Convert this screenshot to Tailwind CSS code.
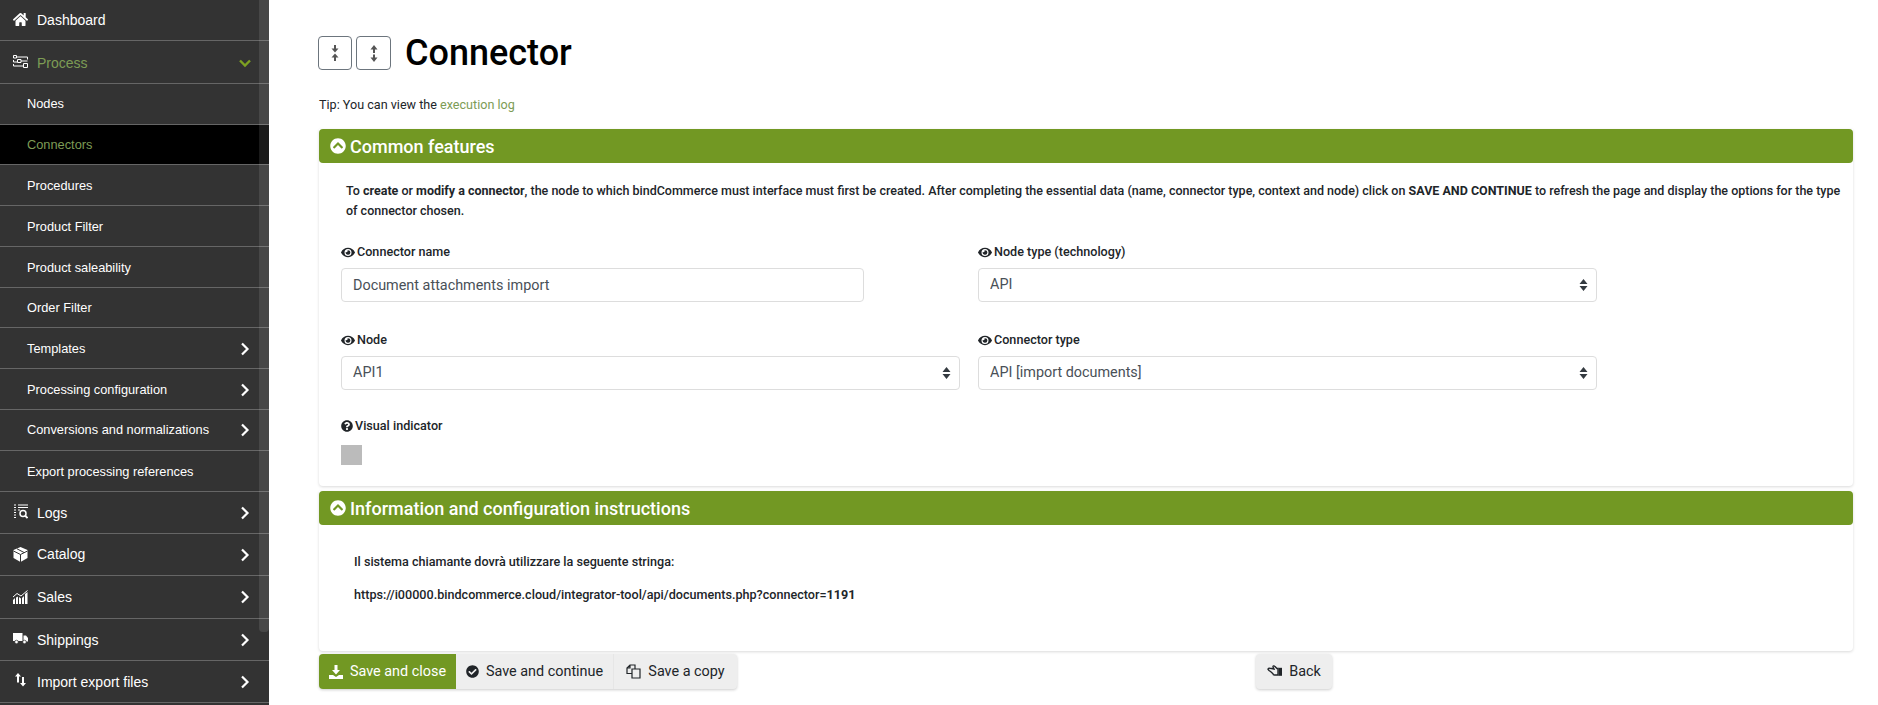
<!doctype html>
<html>

<head>
    <meta charset="UTF-8">
    <meta name="viewport" content="width=device-width, initial-scale=1.0">
    <title>Connector</title>
    <script src="https://cdn.jsdelivr.net/npm/@tailwindcss/browser@4"></script>
</head>

<body class="h-screen w-screen overflow-hidden bg-white flex font-['Roboto',sans-serif] text-[#212529]">
    <svg class="hidden">
        <symbol id="eye" viewBox="0 0 576 512"><path fill="currentColor" d="M572.52 241.4C518.29 135.59 410.93 64 288 64S57.68 135.64 3.48 241.41a32.35 32.35 0 0 0 0 29.19C57.71 376.41 165.07 448 288 448s230.32-71.64 284.52-177.41a32.35 32.35 0 0 0 0-29.19zM288 400a144 144 0 1 1 144-144 143.93 143.93 0 0 1-144 144zm0-240a95.31 95.31 0 0 0-25.31 3.79 47.85 47.85 0 0 1-66.9 66.9A95.78 95.78 0 1 0 288 160z"/></symbol>
        <symbol id="circle-up" viewBox="0 0 512 512"><path fill="currentColor" d="M8 256C8 119 119 8 256 8s248 111 248 248-111 248-248 248S8 393 8 256zm231-113.9L103.5 277.6c-9.4 9.4-9.4 24.6 0 33.9l17 17c9.4 9.4 24.6 9.4 33.9 0L256 226.9l101.6 101.6c9.4 9.4 24.6 9.4 33.9 0l17-17c9.4-9.4 9.4-24.6 0-33.9L273 142.1c-9.4-9.4-24.6-9.4-34 0z"/></symbol>
        <symbol id="chev" viewBox="0 0 10 14"><path fill="none" stroke="currentColor" stroke-width="2.2" d="M2 1.500 7.500 7 2 12.500"/></symbol>
        <symbol id="updown" viewBox="0 0 9 12"><path fill="currentColor" d="M4.500 0 8.500 5H.5ZM4.500 12 .5 7H8.500Z"/></symbol>
    </svg>

    <!-- sidebar -->
    <aside class="w-[269px] h-full shrink-0 bg-[#333] relative overflow-hidden font-['Liberation_Sans',sans-serif] text-white">
        <div class="absolute top-0 right-0 w-[10px] h-[632px] rounded-b bg-white/10"></div>
        <nav class="text-[14px]">
            <a class="flex items-center h-[41px] border-b border-[#666] pl-[13px]">
                <svg class="w-[15px] h-[15px] mr-[9px] -mt-[1px]" viewBox="0 0 576 512" preserveAspectRatio="none"><path fill="currentColor" d="M280.37 148.26L96 300.11V464a16 16 0 0 0 16 16l112.06-.29a16 16 0 0 0 15.92-16V368a16 16 0 0 1 16-16h64a16 16 0 0 1 16 16v95.64a16 16 0 0 0 16 16.05L464 480a16 16 0 0 0 16-16V300L295.67 148.26a12.19 12.19 0 0 0-15.3 0zM571.6 251.47L488 182.56V44.05a12 12 0 0 0-12-12h-56a12 12 0 0 0-12 12v72.61L318.47 43a48 48 0 0 0-61 0L4.34 251.47a12 12 0 0 0-1.6 16.9l25.5 31A12 12 0 0 0 45.15 301l235.22-193.74a12.19 12.19 0 0 1 15.3 0L530.9 301a12 12 0 0 0 16.9-1.6l25.5-31a12 12 0 0 0-1.7-16.93z"/></svg>
                Dashboard
            </a>
            <a class="flex items-center h-[43px] pt-[2px] border-b border-[#666] pl-[13px] pr-[18px] text-[#7d9c55]">
                <svg class="w-[15px] h-[13px] mr-[9px] -mt-[4px] text-white" viewBox="0 0 15 13"><path fill="none" stroke="currentColor" d="M.5.5h3v2.500h-3zM3.500 2H14.500V4.500M.5 5V7H4M4.500 4.500h3.500v3h-3.500zM8 6H14.500M.5 9V11H10.500M10.500 8.500h4v4h-4z"/></svg>
                Process
                <svg class="w-[12px] h-[9px] ml-auto text-[#7da122]" viewBox="0 0 12 9"><path fill="none" stroke="currentColor" stroke-width="2.400" d="M1 1.500 6 6.500 11 1.500"/></svg>
            </a>
        </nav>
        <nav class="text-[12.8px]">
            <a class="flex items-center h-[41px] border-b border-[#666] pl-[27px]">Nodes</a>
            <a class="flex items-center h-[40px] border-b border-[#666] pl-[27px] bg-black text-[#7d9c55]">Connectors</a>
            <a class="flex items-center h-[41px] pt-[1px] border-b border-[#666] pl-[27px]">Procedures</a>
            <a class="flex items-center h-[41px] pt-[1px] border-b border-[#666] pl-[27px]">Product Filter</a>
            <a class="flex items-center h-[41px] pt-[1px] border-b border-[#666] pl-[27px]">Product saleability</a>
            <a class="flex items-center h-[40px] border-b border-[#666] pl-[27px]">Order Filter</a>
            <a class="flex items-center h-[41px] pt-[1px] border-b border-[#666] pl-[27px] pr-[19px]">Templates<svg class="w-[10px] h-[14px] ml-auto"><use href="#chev"/></svg></a>
            <a class="flex items-center h-[41px] pt-[1px] border-b border-[#666] pl-[27px] pr-[19px]">Processing configuration<svg class="w-[10px] h-[14px] ml-auto"><use href="#chev"/></svg></a>
            <a class="flex items-center h-[41px] border-b border-[#666] pl-[27px] pr-[19px]">Conversions and normalizations<svg class="w-[10px] h-[14px] ml-auto"><use href="#chev"/></svg></a>
            <a class="flex items-center h-[41px] pt-[1px] border-b border-[#666] pl-[27px]">Export processing references</a>
        </nav>
        <nav class="text-[14px]">
            <a class="flex items-center h-[42px] pt-[1px] border-b border-[#666] pl-[13px] pr-[19px]">
                <svg class="w-[15px] h-[15px] mr-[9px] -mt-1" viewBox="0 0 15 15"><path fill="none" stroke="currentColor" d="M5 1H15M5 3.500H15M1 1H3M1 3.500H3M1 6H3M1 8.500H3M1 11H3M1 13.500H3M5 6H7"/><circle cx="10" cy="9.500" r="3" fill="none" stroke="currentColor" stroke-width="1.500"/><path stroke="currentColor" stroke-width="1.800" d="M12 11.500 14.500 14"/></svg>
                Logs<svg class="w-[10px] h-[14px] ml-auto"><use href="#chev"/></svg>
            </a>
            <a class="flex items-center h-[42px] border-b border-[#666] pl-[13px] pr-[19px]">
                <svg class="w-[15px] h-[15px] mr-[9px] -mt-[1px]" viewBox="0 0 15 15"><path fill="currentColor" d="M7.500 0 14.500 3V11L7.500 15 .5 11V3Z"/><path fill="none" stroke="#333" d="M.5 4 7.500 7.500 14.500 4M7.500 7.500V15M4 1.800 11 5.500"/></svg>
                Catalog<svg class="w-[10px] h-[14px] ml-auto"><use href="#chev"/></svg>
            </a>
            <a class="flex items-center h-[43px] border-b border-[#666] pl-[13px] pr-[19px]">
                <svg class="w-[15px] h-[14px] mr-[9px]" viewBox="0 0 15 14"><path fill="currentColor" d="M0 10 2 8V14H0ZM3 7.500 5 6.500V14H3ZM6 7 8 8.500V14H6ZM9 8 11 6V14H9ZM12 4 14.500 2V14H12Z"/><path fill="none" stroke="currentColor" d="M0 7 4 3.500 8 6 14.500.5"/></svg>
                Sales<svg class="w-[10px] h-[14px] ml-auto"><use href="#chev"/></svg>
            </a>
            <a class="flex items-center h-[42px] pt-[1px] border-b border-[#666] pl-[13px] pr-[19px]">
                <svg class="w-[15px] h-[11px] mr-[9px] -mt-1" viewBox="0 0 15 11"><path fill="currentColor" d="M0 0H9.500V8H0ZM10.500 2.500H13L15 5V8.500H10.500Z"/><circle cx="3.500" cy="9" r="1.800" fill="currentColor" stroke="#333" stroke-width=".7"/><circle cx="11.500" cy="9" r="1.800" fill="currentColor" stroke="#333" stroke-width=".7"/></svg>
                Shippings<svg class="w-[10px] h-[14px] ml-auto"><use href="#chev"/></svg>
            </a>
            <a class="flex items-center h-[42px] pt-[1px] border-b border-[#666] pl-[13px] pr-[19px]">
                <svg class="w-[15px] h-[14px] mr-[9px] -mt-1" viewBox="0 0 15 14"><path fill="currentColor" d="M5 0 8 3.500H6V9.500H4V3.500H2ZM10 13.500 7 10H9V4H11V10H13Z"/></svg>
                Import export files<svg class="w-[10px] h-[14px] ml-auto"><use href="#chev"/></svg>
            </a>
        </nav>
    </aside>

    <!-- content -->
    <main class="flex-1 min-w-0 pl-[50px] pr-[25px] pt-[36px]">
        <header class="flex items-center h-[34px] -ml-[1px]">
            <button class="w-[34px] h-[34px] border border-[#6c757d] rounded text-[#555] flex items-center justify-center">
                <svg class="w-[8px] h-[16px]" viewBox="0 0 8 16"><path fill="currentColor" d="M3 0H5V3.500H7.500L4 7.600 .5 3.500H3ZM4 8.400 7.500 12.500H5V16H3V12.500H.5Z"/></svg>
            </button>
            <button class="w-[35px] h-[34px] ml-[4px] border border-[#6c757d] rounded text-[#555] flex items-center justify-center">
                <svg class="w-[8px] h-[17px]" viewBox="0 0 8 17"><path fill="currentColor" d="M4 0 7.500 4.500H5V8H3V4.500H.5ZM4 17 .5 12.500H3V9.500H5V12.500H7.500Z"/></svg>
            </button>
            <h1 class="ml-[14px] text-[36px] leading-none font-medium text-black">Connector</h1>
        </header>
        <p class="mt-[25px] text-[12.6px] leading-[20px]">Tip: You can view the <a class="text-[#7d9c55]">execution log</a></p>

        <section class="mt-[14px] shadow-[0_1px_3px_rgba(0,0,0,0.15)] rounded-b">
            <h2 class="h-[34px] bg-[#729823] rounded text-white flex items-center pl-[11px] text-[18px] font-medium">
                <svg class="w-[16px] h-[16px] mr-[4px]"><use href="#circle-up"/></svg>Common features
            </h2>
            <div class="h-[323px] pl-[22px] pt-[18px]">
                <p class="pl-[5px] pr-[6px] text-[12.5px] leading-[20px] font-medium">To <b class="font-bold">create</b> or <b class="font-bold">modify a connector</b>, the node to which bindCommerce must interface must first be created. After completing the essential data (name, connector type, context and node) click on <b class="font-bold">SAVE AND CONTINUE</b> to refresh the page and display the options for the type of connector chosen.</p>
                <div class="mt-[21px] grid grid-cols-[619px_619px] gap-x-[18px] text-[12.6px] font-medium">
                    <div>
                        <label class="flex items-center h-[20px]"><svg class="w-[14px] h-[13px] mr-[2px]"><use href="#eye"/></svg>Connector name</label>
                        <input class="block mt-[6px] w-[523px] h-[34px] border border-[#ddd] rounded px-[11px] text-[14.4px] font-normal text-[#495057]" value="Document attachments import">
                    </div>
                    <div>
                        <label class="flex items-center h-[20px]"><svg class="w-[14px] h-[13px] mr-[2px]"><use href="#eye"/></svg>Node type (technology)</label>
                        <div class="relative mt-[6px]">
                            <select class="block w-full h-[34px] appearance-none border border-[#ddd] rounded px-[11px] text-[14.4px] font-normal text-[#495057]"><option>API</option></select>
                            <svg class="absolute right-[9px] top-[11px] w-[9px] h-[12px] text-[#343a40]"><use href="#updown"/></svg>
                        </div>
                    </div>
                    <div class="mt-[28px]">
                        <label class="flex items-center h-[20px]"><svg class="w-[14px] h-[13px] mr-[2px]"><use href="#eye"/></svg>Node</label>
                        <div class="relative mt-[6px]">
                            <select class="block w-full h-[34px] appearance-none border border-[#ddd] rounded px-[11px] text-[14.4px] font-normal text-[#495057]"><option>API1</option></select>
                            <svg class="absolute right-[9px] top-[11px] w-[9px] h-[12px] text-[#343a40]"><use href="#updown"/></svg>
                        </div>
                    </div>
                    <div class="mt-[28px]">
                        <label class="flex items-center h-[20px]"><svg class="w-[14px] h-[13px] mr-[2px]"><use href="#eye"/></svg>Connector type</label>
                        <div class="relative mt-[6px]">
                            <select class="block w-full h-[34px] appearance-none border border-[#ddd] rounded px-[11px] text-[14.4px] font-normal text-[#495057]"><option>API [import documents]</option></select>
                            <svg class="absolute right-[9px] top-[11px] w-[9px] h-[12px] text-[#343a40]"><use href="#updown"/></svg>
                        </div>
                    </div>
                </div>
                <label class="mt-[26px] flex items-center h-[20px] text-[12.6px] font-medium">
                    <svg class="w-[12px] h-[12px] mr-[2px]" viewBox="0 0 512 512"><path fill="currentColor" d="M504 256c0 136.997-111.043 248-248 248S8 392.997 8 256C8 119.083 119.043 8 256 8s248 111.083 248 248zM262.655 90c-54.497 0-89.255 22.957-116.549 63.758-3.536 5.286-2.353 12.415 2.715 16.258l34.699 26.31c5.205 3.947 12.621 3.008 16.665-2.122 17.864-22.658 30.113-35.797 57.303-35.797 20.429 0 45.698 13.148 45.698 32.958 0 14.976-12.363 22.667-32.534 33.976C247.128 238.528 216 254.941 216 296v4c0 6.627 5.373 12 12 12h56c6.627 0 12-5.373 12-12v-1.333c0-28.462 83.186-29.647 83.186-106.667 0-58.002-60.165-102-116.531-102zM256 338c-25.365 0-46 20.635-46 46 0 25.364 20.635 46 46 46s46-20.636 46-46c0-25.365-20.635-46-46-46z"/></svg>
                    Visual indicator
                </label>
                <div class="mt-[9px] w-[21px] h-[20px] bg-[#bbb]"></div>
            </div>
        </section>

        <section class="mt-[5px] shadow-[0_1px_3px_rgba(0,0,0,0.15)] rounded-b">
            <h2 class="h-[34px] bg-[#729823] rounded text-white flex items-center pl-[11px] text-[18px] font-medium">
                <svg class="w-[16px] h-[16px] mr-[4px]"><use href="#circle-up"/></svg>Information and configuration instructions
            </h2>
            <div class="h-[126px] pl-[35px] pt-[27px] text-[12.6px] leading-[20px] font-medium">
                <p>Il sistema chiamante dovrà utilizzare la seguente stringa:</p>
                <p class="mt-[13px]">https://i00000.bindcommerce.cloud/integrator-tool/api/documents.php?connector=<b class="font-bold">1191</b></p>
            </div>
        </section>

        <footer class="mt-[3px] flex text-[14.4px]">
            <div class="flex h-[35px] rounded shadow-[0_1px_3px_rgba(0,0,0,0.2)] bg-[#eee]">
                <button class="w-[137px] bg-[#729823] text-white rounded-l flex items-center justify-center gap-[7px]">
                    <svg class="w-[14px] h-[14px]" viewBox="0 0 14 14"><path fill="currentColor" d="M5.500 0H8.500V5H11L7 9.500 3 5H5.500ZM0 10H4L7 12 10 10H14V14H0Z"/></svg>Save and close
                </button>
                <button class="w-[158px] flex items-center justify-center gap-[7px] border-r border-[#e6e6e6] text-[#212529]">
                    <svg class="w-[13px] h-[13px]" viewBox="0 0 512 512"><path fill="currentColor" d="M504 256c0 136.967-111.033 248-248 248S8 392.967 8 256 119.033 8 256 8s248 111.033 248 248zM227.314 387.314l184-184c6.248-6.248 6.248-16.379 0-22.627l-22.627-22.627c-6.248-6.249-16.379-6.249-22.628 0L216 308.118l-70.059-70.059c-6.248-6.248-16.379-6.248-22.628 0l-22.627 22.627c-6.248 6.248-6.248 16.379 0 22.627l104 104c6.249 6.249 16.379 6.249 22.628.001z"/></svg>Save and continue
                </button>
                <button class="w-[123px] flex items-center justify-center gap-[7px] text-[#212529]">
                    <svg class="w-[15px] h-[15px]" viewBox="0 0 15 15"><path fill="none" stroke="currentColor" stroke-width="1.200" d="M6 5H14V14H6ZM6 9.500H1V4L4 1H9V5M4 1V4H1"/></svg>Save a copy
                </button>
            </div>
            <button class="ml-[519px] w-[76px] h-[35px] rounded bg-[#eee] shadow-[0_1px_3px_rgba(0,0,0,0.2)] flex items-center justify-center gap-[6px] text-[#212529]">
                <svg class="w-[16px] h-[13px]" viewBox="0 0 16 13"><path fill="none" stroke="currentColor" stroke-width="1.400" d="M1 4.200C1 3.300 2 3 2.600 3.200L7 4 6 2C5.800 1 7 .6 7.700 1.300L10 3.500H11V10H7.500C6.500 10 6 9.500 6 8.700L3.500 6.500 2 5.500Z"/><path fill="currentColor" d="M11.500 2.800H15V10.800H11.500Z"/></svg>Back
            </button>
        </footer>
    </main>
</body>

</html>
